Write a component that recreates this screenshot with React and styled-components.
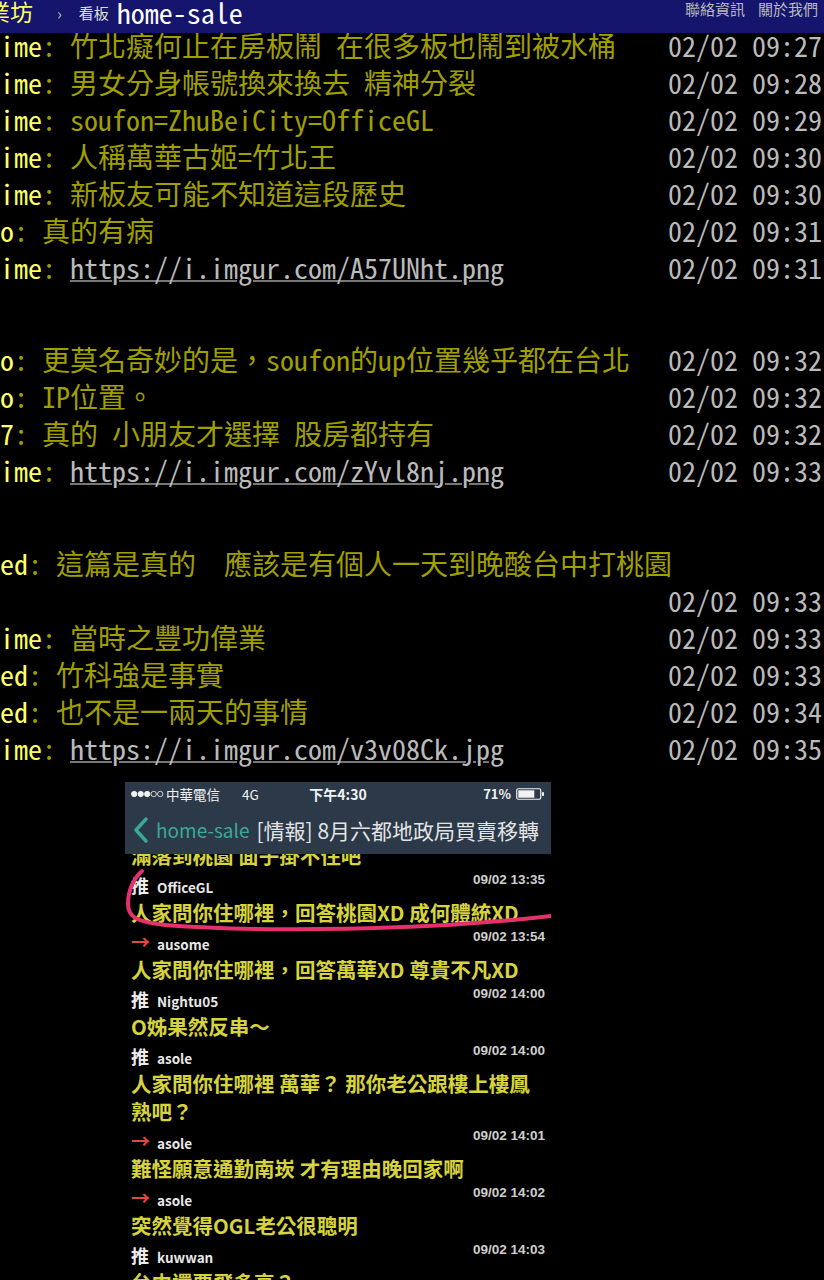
import styled, { createGlobalStyle } from "styled-components"

const GlobalStyle = createGlobalStyle`
  html, body {
    margin: 0;
    padding: 0;
    background: #000;
  }
  body {
    width: 824px;
    height: 1280px;
    overflow: hidden;
    font-family: "Noto Sans Mono CJK TC", "Noto Sans Mono CJK SC", "DejaVu Sans Mono", monospace;
  }
`

const TopBar = styled.div`
  position: fixed;
  top: 0;
  left: 0;
  right: 0;
  height: 33px;
  background: #15156d;
  display: flex;
  align-items: flex-start;
  overflow: hidden;
  z-index: 10;
`
const Logo = styled.span`
  font-size: 23px;
  line-height: 23px;
  color: #ffff66;
  margin-left: -105px;
  white-space: nowrap;
`
const Crumb = styled.span`
  color: #bbb;
  font-size: 16px;
  line-height: 26px;
  margin-left: 24px;
`
const BoardLabel = styled.span`
  color: #ddd;
  font-size: 15px;
  line-height: 26px;
  margin-left: 17px;
`
const BoardName = styled.span`
  color: #fff;
  font-size: 28px;
  line-height: 24px;
  margin-left: 8px;
`
const TopLinks = styled.div`
  margin-left: auto;
  display: flex;
  gap: 13px;
  padding-right: 6px;
  font-size: 15px;
  line-height: 18px;
  color: #bbb;
`

const Main = styled.div`
  padding-top: 26.5px;
`
const Push = styled.div`
  display: flex;
  flex-wrap: wrap;
  font-size: 28px;
  line-height: 37px;
  padding-right: 2px;
  white-space: pre;
`
const UserId = styled.span`
  color: #ffff66;
`
const PushText = styled.span`
  color: #a09f00;
`
const Link = styled.a`
  color: #bbb;
  text-decoration: underline;
  text-decoration-color: #777;
  text-decoration-thickness: 2px;
`
const Stamp = styled.span`
  color: #bbb;
  margin-left: auto;
`
const RichGap = styled.div`
  height: 55.5px;
`

/* embedded phone screenshot */
const Shot = styled.div`
  margin: 15.5px 0 0 125px;
  width: 426px;
  position: relative;
  font-family: "Noto Sans CJK TC", "Noto Sans", sans-serif;
  background: #000;
`
const StatusBar = styled.div`
  height: 23px;
  background: #2b3949;
  display: grid;
  grid-template-columns: 1fr auto 1fr;
  align-items: center;
  padding: 0 6px;
  color: #f2f2f2;
  font-size: 13.5px;
`
const StatusLeft = styled.div`
  display: flex;
  align-items: center;
  gap: 2px;
`
const Carrier = styled.span`
  margin-right: 20px;
`
const Clock = styled.span`
  font-weight: 700;
  font-size: 14px;
`
const StatusRight = styled.div`
  display: flex;
  justify-content: flex-end;
  align-items: center;
  gap: 5px;
  font-weight: 700;
  font-size: 13px;
`
const NavBar = styled.div`
  height: 49px;
  background: #2b3949;
  display: flex;
  align-items: center;
  padding-left: 8px;
  white-space: nowrap;
`
const BackText = styled.span`
  color: #3aa994;
  font-size: 19px;
  margin-left: 7px;
`
const NavTitle = styled.span`
  color: #e4e4e4;
  font-size: 21px;
  margin-left: 7px;
`
const ShotBody = styled.div`
  overflow: hidden;
  padding: 0 6px;
`
const Said = styled.div`
  color: #d6d33c;
  font-weight: 700;
  font-size: 20.5px;
  line-height: 28px;
  white-space: nowrap;
  margin-top: ${(p) => (p.$cut ? "-13.5px" : "0")};
`
const CommentHead = styled.div`
  height: 29px;
  display: flex;
  align-items: flex-end;
  padding-bottom: 3px;
  box-sizing: border-box;
`
const Tag = styled.span`
  color: ${(p) => (p.$arrow ? "#e04848" : "#ececec")};
  font-weight: 700;
  font-size: ${(p) => (p.$arrow ? "19px" : "18px")};
  line-height: 20px;
  width: 26px;
`
const Who = styled.span`
  color: #e8e8e8;
  font-weight: 700;
  font-size: 13.5px;
  line-height: 16px;
`
const When = styled.span`
  margin-left: auto;
  align-self: flex-start;
  margin-top: 3px;
  color: #cfcfcf;
  font-weight: 700;
  font-size: 13.5px;
  line-height: 16px;
  font-family: "Liberation Sans", Arial, sans-serif;
`
const Circle = styled.svg`
  position: absolute;
  left: 0;
  top: 0;
  pointer-events: none;
`

const pushes = [
  { u: "ime", t: "竹北癡何止在房板鬧 在很多板也鬧到被水桶", d: "02/02 09:27" },
  { u: "ime", t: "男女分身帳號換來換去 精神分裂", d: "02/02 09:28" },
  { u: "ime", t: "soufon=ZhuBeiCity=OfficeGL", d: "02/02 09:29" },
  { u: "ime", t: "人稱萬華古姬=竹北王", d: "02/02 09:30" },
  { u: "ime", t: "新板友可能不知道這段歷史", d: "02/02 09:30" },
  { u: "o", t: "真的有病", d: "02/02 09:31" },
  { u: "ime", link: "https://i.imgur.com/A57UNht.png", d: "02/02 09:31", gap: true },
  { u: "o", t: "更莫名奇妙的是，soufon的up位置幾乎都在台北", d: "02/02 09:32" },
  { u: "o", t: "IP位置。", d: "02/02 09:32" },
  { u: "7", t: "真的 小朋友才選擇 股房都持有", d: "02/02 09:32" },
  { u: "ime", link: "https://i.imgur.com/zYvl8nj.png", d: "02/02 09:33", gap: true },
  { u: "ed", t: "這篇是真的  應該是有個人一天到晚酸台中打桃園", d: "02/02 09:33" },
  { u: "ime", t: "當時之豐功偉業", d: "02/02 09:33" },
  { u: "ed", t: "竹科強是事實", d: "02/02 09:33" },
  { u: "ed", t: "也不是一兩天的事情", d: "02/02 09:34" },
  { u: "ime", link: "https://i.imgur.com/v3v08Ck.jpg", d: "02/02 09:35" },
]

const comments = [
  { tag: "推", user: "OfficeGL", time: "09/02 13:35", lines: ["人家問你住哪裡，回答桃園XD 成何體統XD"] },
  { tag: "→", user: "ausome", time: "09/02 13:54", lines: ["人家問你住哪裡，回答萬華XD 尊貴不凡XD"] },
  { tag: "推", user: "Nightu05", time: "09/02 14:00", lines: ["O姊果然反串～"] },
  { tag: "推", user: "asole", time: "09/02 14:00", lines: ["人家問你住哪裡 萬華？ 那你老公跟樓上樓鳳", "熟吧？"] },
  { tag: "→", user: "asole", time: "09/02 14:01", lines: ["難怪願意通勤南崁 才有理由晚回家啊"] },
  { tag: "→", user: "asole", time: "09/02 14:02", lines: ["突然覺得OGL老公很聰明"] },
  { tag: "推", user: "kuwwan", time: "09/02 14:03", lines: ["台中還要飛多高？"] },
]

const Signal = () => (
  <svg width="33" height="8" viewBox="0 0 33 8">
    {[0, 1, 2, 3, 4].map((i) => (
      <circle
        key={i}
        cx={3.2 + i * 6.5}
        cy="4"
        r="2.7"
        fill={i < 3 ? "#f2f2f2" : "none"}
        stroke="#f2f2f2"
        strokeWidth="0.8"
      />
    ))}
  </svg>
)

const Battery = () => (
  <svg width="29" height="12" viewBox="0 0 29 12">
    <rect x="0.75" y="0.75" width="24" height="10.5" rx="1.5" fill="none" stroke="#f2f2f2" strokeWidth="1.2" />
    <rect x="2.3" y="2.3" width="16" height="7.4" fill="#f2f2f2" />
    <rect x="26" y="4" width="2" height="4" rx="0.8" fill="#f2f2f2" />
  </svg>
)

const PhoneShot = () => (
  <Shot>
    <StatusBar>
      <StatusLeft>
        <Signal />
        <Carrier>中華電信</Carrier>
        <span>4G</span>
      </StatusLeft>
      <Clock>下午4:30</Clock>
      <StatusRight>
        <span>71%</span>
        <Battery />
      </StatusRight>
    </StatusBar>
    <NavBar>
      <svg width="16" height="26" viewBox="0 0 16 26">
        <polyline points="13,2 3,13 13,24" fill="none" stroke="#3aa994" strokeWidth="3.4" strokeLinecap="round" strokeLinejoin="round" />
      </svg>
      <BackText>home-sale</BackText>
      <NavTitle>[情報] 8月六都地政局買賣移轉</NavTitle>
    </NavBar>
    <ShotBody>
      <Said $cut>滿落到桃園 面子掛不住吧</Said>
      {comments.map((c, i) => (
        <div key={i}>
          <CommentHead>
            <Tag $arrow={c.tag === "→"}>{c.tag}</Tag>
            <Who>{c.user}</Who>
            <When>{c.time}</When>
          </CommentHead>
          {c.lines.map((l, j) => (
            <Said key={j}>{l}</Said>
          ))}
        </div>
      ))}
    </ShotBody>
    <Circle width="426" height="200" viewBox="0 0 426 200">
      <path
        d="M 17 89 C 9 96 3 108 3 122 C 3 134 10 140 40 143 C 130 150 300 149 426 134"
        fill="none"
        stroke="#e5306c"
        strokeWidth="4"
        strokeLinecap="round"
      />
    </Circle>
  </Shot>
)

export default function App() {
  return (
    <>
      <GlobalStyle />
      <TopBar>
        <Logo>批踢踢實業坊</Logo>
        <Crumb>›</Crumb>
        <BoardLabel>看板</BoardLabel>
        <BoardName>home-sale</BoardName>
        <TopLinks>
          <span>聯絡資訊</span>
          <span>關於我們</span>
        </TopLinks>
      </TopBar>
      <Main>
        {pushes.map((p, i) => (
          <div key={i}>
            <Push>
              <span>
                <UserId>{p.u}</UserId>
                <PushText>
                  {": "}
                  {p.link ? <Link href={p.link}>{p.link}</Link> : p.t}
                </PushText>
              </span>
              <Stamp>{" " + p.d}</Stamp>
            </Push>
            {p.gap && <RichGap />}
          </div>
        ))}
        <PhoneShot />
      </Main>
    </>
  )
}
